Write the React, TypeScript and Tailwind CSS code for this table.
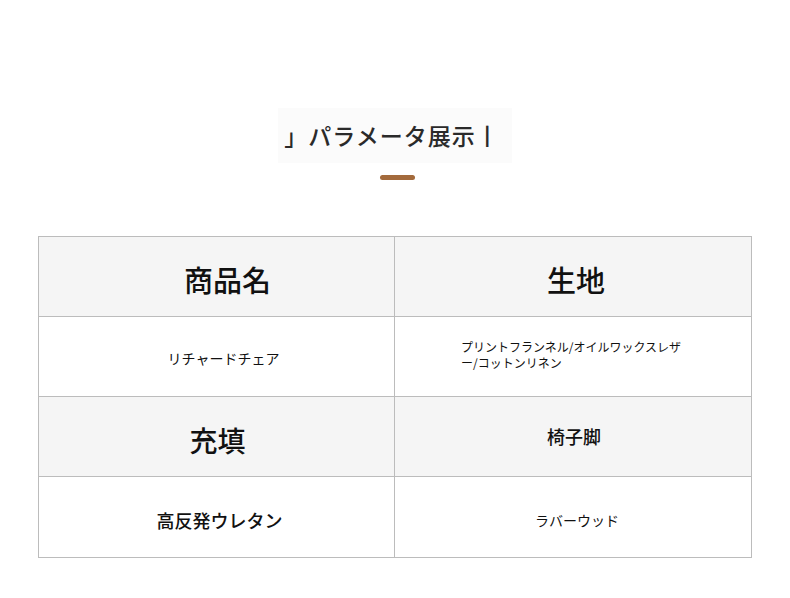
const font = { fontFamily: '"Noto Sans CJK JP", "Noto Sans", sans-serif' };

const head = "flex items-center justify-center bg-[#f5f5f5] h-[80px]";
const body = "flex items-center justify-center bg-white h-[80px]";

export default function App() {
  return (
    <div className="w-[790px] h-[598px] bg-white text-[#111]" style={font}>
      <div className="flex flex-col items-center pt-[108px]">
        <div className="flex items-center justify-center w-[234px] h-[55px] bg-[#fbfbfb] pr-[6px]">
          <span className="text-[23px] font-medium text-[#2a2a2a] tracking-[1px] leading-none">」パラメータ展示丨</span>
        </div>
        <div className="mt-[12px] ml-[4px] w-[35px] h-[5px] rounded-full bg-[#a36a3c]" />
      </div>

      <div className="mx-[38px] mt-[56px] grid grid-cols-2 border border-[#bcbcbc]">
        <div className={`${head} border-r border-b border-[#bcbcbc]`}>
          <span className="text-[29px] font-medium pt-[6px] pl-[22px]">商品名</span>
        </div>
        <div className={`${head} border-b border-[#bcbcbc]`}>
          <span className="text-[29px] font-medium pt-[6px] pl-[6px]">生地</span>
        </div>

        <div className={`${body} border-r border-b border-[#bcbcbc]`}>
          <span className="text-[14px] pt-[4px] pl-[14px]">リチャードチェア</span>
        </div>
        <div className={`${body} border-b border-[#bcbcbc]`}>
          <p className="w-[232px] text-left text-[12px] leading-[16px] pl-[4px] pb-[4px]">
            プリントフランネル/オイルワックスレザー/コットンリネン
          </p>
        </div>

        <div className={`${head} border-r border-b border-[#bcbcbc]`}>
          <span className="text-[28px] font-medium pt-[6px] pl-[2px]">充填</span>
        </div>
        <div className={`${head} border-b border-[#bcbcbc]`}>
          <span className="text-[18px] font-medium pl-[2px]">椅子脚</span>
        </div>

        <div className={`${body} border-r border-[#bcbcbc]`}>
          <span className="text-[18px] font-medium pt-[6px] pl-[6px]">高反発ウレタン</span>
        </div>
        <div className={body}>
          <span className="text-[14px] pt-[6px] pl-[8px]">ラバーウッド</span>
        </div>
      </div>
    </div>
  );
}
